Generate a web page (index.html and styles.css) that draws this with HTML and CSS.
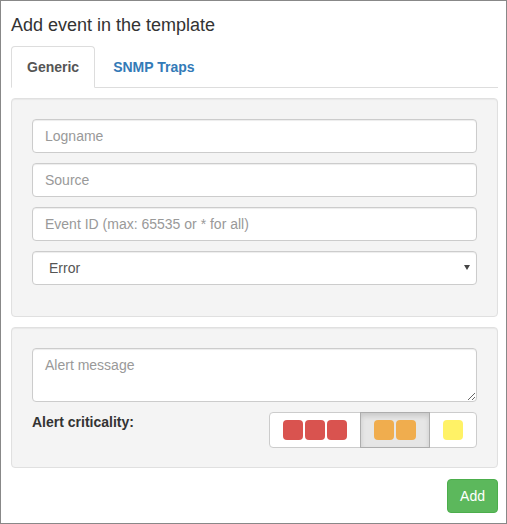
FILE: index.html
```html
<!DOCTYPE html>
<html>
<head>
<meta charset="utf-8">
<link rel="stylesheet" href="styles.css">
</head>
<body>
<div class="dialog">
  <h4 class="title">Add event in the template</h4>
  <ul class="tabs">
    <li class="tab active"><a>Generic</a></li>
    <li class="tab"><a>SNMP Traps</a></li>
  </ul>
  <div class="well">
    <input class="field" type="text" placeholder="Logname">
    <input class="field" type="text" placeholder="Source">
    <input class="field" type="text" placeholder="Event ID (max: 65535 or * for all)">
    <div class="select-wrap">
      <select class="field select"><option>Error</option></select>
    </div>
  </div>
  <div class="well well-alert">
    <textarea class="field area" rows="2" placeholder="Alert message"></textarea>
    <div class="crit-row">
      <label class="crit-label">Alert criticality:</label>
      <div class="btn-group">
        <button class="crit-btn"><span class="sq red"></span><span class="sq red"></span><span class="sq red"></span></button>
        <button class="crit-btn active"><span class="sq orange"></span><span class="sq orange"></span></button>
        <button class="crit-btn"><span class="sq yellow"></span></button>
      </div>
    </div>
  </div>
  <div class="footer">
    <button class="btn-add">Add</button>
  </div>
</div>
</body>
</html>
```
FILE: styles.css
```css
html, body {
  margin: 0;
  padding: 0;
  background: #fff;
}
* {
  box-sizing: border-box;
}
.dialog {
  width: 507px;
  height: 524px;
  border: 1px solid #888;
  padding: 10px 8px 10px 10px;
  font-family: "Liberation Sans", Arial, sans-serif;
  font-size: 14px;
  line-height: 20px;
  color: #333;
  overflow: hidden;
}
.title {
  margin: 4px 0 11px;
  font-size: 18px;
  line-height: 20px;
  font-weight: 400;
  color: #333;
}
.tabs {
  list-style: none;
  margin: 0 0 10px;
  padding: 0;
  display: flex;
  border-bottom: 1px solid #ddd;
}
.tab {
  margin-bottom: -1px;
}
.tab a {
  display: block;
  padding: 10px 15px;
  margin-right: 2px;
  line-height: 20px;
  border: 1px solid transparent;
  border-radius: 4px 4px 0 0;
  font-weight: bold;
  color: #337ab7;
}
.tab.active a {
  color: #555;
  background: #fff;
  border-color: #ddd #ddd transparent;
}
.well {
  background: #f4f4f4;
  border: 1px solid #e0e0e0;
  border-radius: 4px;
  padding: 20px 20px 21px;
  margin-bottom: 10px;
  box-shadow: inset 0 1px 1px rgba(0,0,0,.05);
}
.well-alert {
  padding-bottom: 19px;
  margin-bottom: 11px;
}
.field {
  display: block;
  width: 100%;
  height: 34px;
  margin: 0 0 10px;
  padding: 6px 12px;
  font-family: "Liberation Sans", Arial, sans-serif;
  font-size: 14px;
  line-height: 20px;
  color: #555;
  background: #fff;
  border: 1px solid #ccc;
  border-radius: 4px;
  box-shadow: inset 0 1px 1px rgba(0,0,0,.075);
  outline: none;
}
.field::placeholder {
  color: #999;
}
.select-wrap {
  position: relative;
}
.select {
  -webkit-appearance: none;
  appearance: none;
  padding-left: 16px;
}
.select-wrap::after {
  content: "";
  position: absolute;
  top: 14px;
  right: 7px;
  border-left: 3px solid transparent;
  border-right: 3px solid transparent;
  border-top: 5px solid #444;
}
.area {
  height: 54px;
  resize: vertical;
}
.crit-row {
  display: flex;
  justify-content: space-between;
  align-items: flex-start;
}
.crit-label {
  font-weight: bold;
  color: #333;
  line-height: 20px;
}
.btn-group {
  display: flex;
}
.crit-btn {
  display: flex;
  gap: 2px;
  padding: 7px 13px;
  background: #fff;
  border: 1px solid #ccc;
  border-radius: 0;
  margin: 0;
}
.crit-btn + .crit-btn {
  margin-left: -1px;
}
.crit-btn:first-child {
  border-radius: 4px 0 0 4px;
}
.crit-btn:last-child {
  border-radius: 0 4px 4px 0;
}
.crit-btn.active {
  background: #e6e6e6;
  border-color: #adadad;
  box-shadow: inset 0 3px 5px rgba(0,0,0,.125);
  position: relative;
}
.sq {
  display: block;
  width: 20px;
  height: 20px;
  border-radius: 4px;
}
.red { background: #d9534f; }
.orange { background: #f0ad4e; }
.yellow { background: #fff266; }
.footer {
  display: flex;
  justify-content: flex-end;
}
.btn-add {
  height: 34px;
  padding: 6px 12px;
  font-family: "Liberation Sans", Arial, sans-serif;
  font-size: 14px;
  line-height: 20px;
  color: #fff;
  background: #5cb85c;
  border: 1px solid #4cae4c;
  border-radius: 4px;
}
```
